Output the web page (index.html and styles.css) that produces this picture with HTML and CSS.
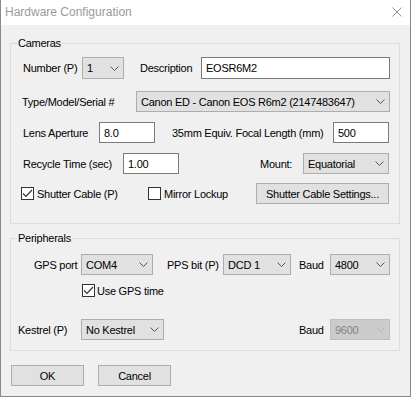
FILE: index.html
```html
<!DOCTYPE html>
<html>
<head>
<meta charset="utf-8">
<title>Hardware Configuration</title>
<link rel="stylesheet" href="styles.css">
</head>
<body>
<div class="window">
  <div class="titlebar">
    <span class="title">Hardware Configuration</span>
    <svg class="close" width="10" height="10" viewBox="0 0 10 10"><path d="M0.5 0.5 L9.5 9.5 M9.5 0.5 L0.5 9.5" stroke="#8f8f8f" stroke-width="1" fill="none"/></svg>
  </div>
  <div class="content">
    <div class="group cameras">
      <span class="group-title">Cameras</span>
      <div class="row r1">
        <span class="lbl w59">Number (P)</span>
        <div class="combo w42"><span>1</span><svg class="chev" width="9" height="5" viewBox="0 0 9 5"><path d="M0.5 0.5 L4.5 4.5 L8.5 0.5" stroke="#555" fill="none"/></svg></div>
        <span class="lbl ml16 w61">Description</span>
        <div class="text w189">EOSR6M2</div>
      </div>
      <div class="row r2">
        <span class="lbl w114">Type/Model/Serial #</span>
        <div class="combo w254"><span>Canon ED - Canon EOS R6m2 (2147483647)</span><svg class="chev" width="9" height="5" viewBox="0 0 9 5"><path d="M0.5 0.5 L4.5 4.5 L8.5 0.5" stroke="#555" fill="none"/></svg></div>
      </div>
      <div class="row r3">
        <span class="lbl w76">Lens Aperture</span>
        <div class="text w56">8.0</div>
        <span class="lbl ml17 w161">35mm Equiv. Focal Length (mm)</span>
        <div class="text w56">500</div>
      </div>
      <div class="row r4">
        <span class="lbl w100">Recycle Time (sec)</span>
        <div class="text w56">1.00</div>
        <span class="lbl ml81 w43">Mount:</span>
        <div class="combo w86"><span>Equatorial</span><svg class="chev" width="9" height="5" viewBox="0 0 9 5"><path d="M0.5 0.5 L4.5 4.5 L8.5 0.5" stroke="#555" fill="none"/></svg></div>
      </div>
      <div class="row r5">
        <div class="check w127"><span class="box"><svg width="11" height="11" viewBox="0 0 11 11"><path d="M1 5.5 L4 8.5 L10 2" stroke="#333" stroke-width="1.2" fill="none"/></svg></span><span>Shutter Cable (P)</span></div>
        <div class="check w108"><span class="box"></span><span>Mirror Lockup</span></div>
        <div class="button w133">Shutter Cable Settings...</div>
      </div>
    </div>
    <div class="group periph">
      <span class="group-title">Peripherals</span>
      <div class="row p1">
        <span class="lbl w47">GPS port</span>
        <div class="combo w72"><span>COM4</span><svg class="chev" width="9" height="5" viewBox="0 0 9 5"><path d="M0.5 0.5 L4.5 4.5 L8.5 0.5" stroke="#555" fill="none"/></svg></div>
        <span class="lbl ml14 w56">PPS bit (P)</span>
        <div class="combo w68"><span>DCD 1</span><svg class="chev" width="9" height="5" viewBox="0 0 9 5"><path d="M0.5 0.5 L4.5 4.5 L8.5 0.5" stroke="#555" fill="none"/></svg></div>
        <span class="lbl ml8 w31">Baud</span>
        <div class="combo w60"><span>4800</span><svg class="chev" width="9" height="5" viewBox="0 0 9 5"><path d="M0.5 0.5 L4.5 4.5 L8.5 0.5" stroke="#555" fill="none"/></svg></div>
      </div>
      <div class="row p2">
        <div class="check gps"><span class="box"><svg width="11" height="11" viewBox="0 0 11 11"><path d="M1 5.5 L4 8.5 L10 2" stroke="#333" stroke-width="1.2" fill="none"/></svg></span><span>Use GPS time</span></div>
      </div>
      <div class="row p3">
        <span class="lbl w63">Kestrel (P)</span>
        <div class="combo w83"><span>No Kestrel</span><svg class="chev" width="9" height="5" viewBox="0 0 9 5"><path d="M0.5 0.5 L4.5 4.5 L8.5 0.5" stroke="#555" fill="none"/></svg></div>
        <span class="lbl ml135 w31">Baud</span>
        <div class="combo disabled w60"><span>9600</span><svg class="chev" width="9" height="5" viewBox="0 0 9 5"><path d="M0.5 0.5 L4.5 4.5 L8.5 0.5" stroke="#b0b0b0" fill="none"/></svg></div>
      </div>
    </div>
    <div class="buttons">
      <div class="button w73">OK</div>
      <div class="button w73 ml14">Cancel</div>
    </div>
  </div>
</div>
</body>
</html>
```

FILE: styles.css
```css
* { box-sizing: border-box; }
body {
  margin: 0;
  background: #ffffff;
  font-family: "Liberation Sans", Arial, sans-serif;
  font-size: 11px;
  letter-spacing: -0.25px;
  color: #000;
}
.window {
  width: 411px;
  height: 397px;
  border: 1px solid #8a8a8a;
  border-top: none;
  background: #f0f0f0;
}
.titlebar {
  height: 25px;
  background: #fff;
  display: flex;
  align-items: center;
  justify-content: space-between;
  padding: 0 8px 0 4px;
}
.title {
  font-size: 12px;
  letter-spacing: 0;
  color: #9a9a9a;
  padding-bottom: 1px;
}
.close { display: block; margin-top: -1px; }
.content { padding: 18px 10px 0 9px; }
.group {
  position: relative;
  border: 1px solid #dcdcdc;
}
.group-title {
  position: absolute;
  left: 6px;
  top: -8px;
  padding: 0 1px;
  line-height: 14px;
  background: #f0f0f0;
}
.row { display: flex; align-items: center; }
.cameras { padding-bottom: 19px; }
.r1 { margin-top: 13px; height: 22px; padding-left: 12px; }
.r2 { margin-top: 12px; height: 21px; padding-left: 11px; }
.r3 { margin-top: 10px; height: 21px; padding-left: 12px; }
.r4 { margin-top: 10px; height: 21px; padding-left: 12px; }
.r5 { margin-top: 9px; height: 21px; padding-left: 10px; }
.periph { margin-top: 14px; padding-bottom: 10px; }
.p1 { margin-top: 15px; height: 21px; padding-left: 23px; }
.p2 { margin-top: 8px; height: 15px; padding-left: 71px; }
.p3 { margin-top: 21px; height: 21px; padding-left: 7px; }
.lbl { display: block; white-space: nowrap; flex: none; }
.combo {
  height: 100%;
  flex: none;
  display: flex;
  align-items: center;
  justify-content: space-between;
  padding: 0 4px 0 4px;
  background: #e1e1e1;
  border: 1px solid #adadad;
  white-space: nowrap;
  overflow: hidden;
}
.combo.disabled {
  background: #cccccc;
  border-color: #bfbfbf;
  color: #838383;
}
.chev { display: block; flex: none; }
.text {
  height: 100%;
  flex: none;
  display: flex;
  align-items: center;
  padding-left: 4px;
  background: #fff;
  border: 1px solid #7a7a7a;
}
.check {
  display: flex;
  align-items: center;
  flex: none;
  white-space: nowrap;
}
.box {
  width: 13px;
  height: 13px;
  margin-right: 3px;
  border: 1px solid #333;
  background: #fff;
  display: flex;
  align-items: center;
  justify-content: center;
}
.gps .box { margin-right: 2px; }
.button {
  height: 21px;
  flex: none;
  display: flex;
  align-items: center;
  justify-content: center;
  background: #e1e1e1;
  border: 1px solid #adadad;
  white-space: nowrap;
}
.buttons {
  display: flex;
  margin-top: 14px;
  margin-left: 1px;
}
.w31 { width: 31px; }
.w42 { width: 42px; }
.w43 { width: 43px; }
.w47 { width: 47px; }
.w56 { width: 56px; }
.w59 { width: 59px; }
.w60 { width: 60px; }
.w61 { width: 61px; }
.w63 { width: 63px; }
.w68 { width: 68px; }
.w72 { width: 72px; }
.w73 { width: 73px; }
.w76 { width: 76px; }
.w83 { width: 83px; }
.w86 { width: 86px; }
.w100 { width: 100px; }
.w108 { width: 108px; }
.w114 { width: 114px; }
.w127 { width: 127px; }
.w133 { width: 133px; }
.w161 { width: 161px; }
.w189 { width: 189px; }
.w254 { width: 254px; }
.ml8 { margin-left: 8px; }
.ml14 { margin-left: 14px; }
.ml16 { margin-left: 16px; }
.ml17 { margin-left: 17px; }
.ml81 { margin-left: 81px; }
.ml135 { margin-left: 135px; }
```
